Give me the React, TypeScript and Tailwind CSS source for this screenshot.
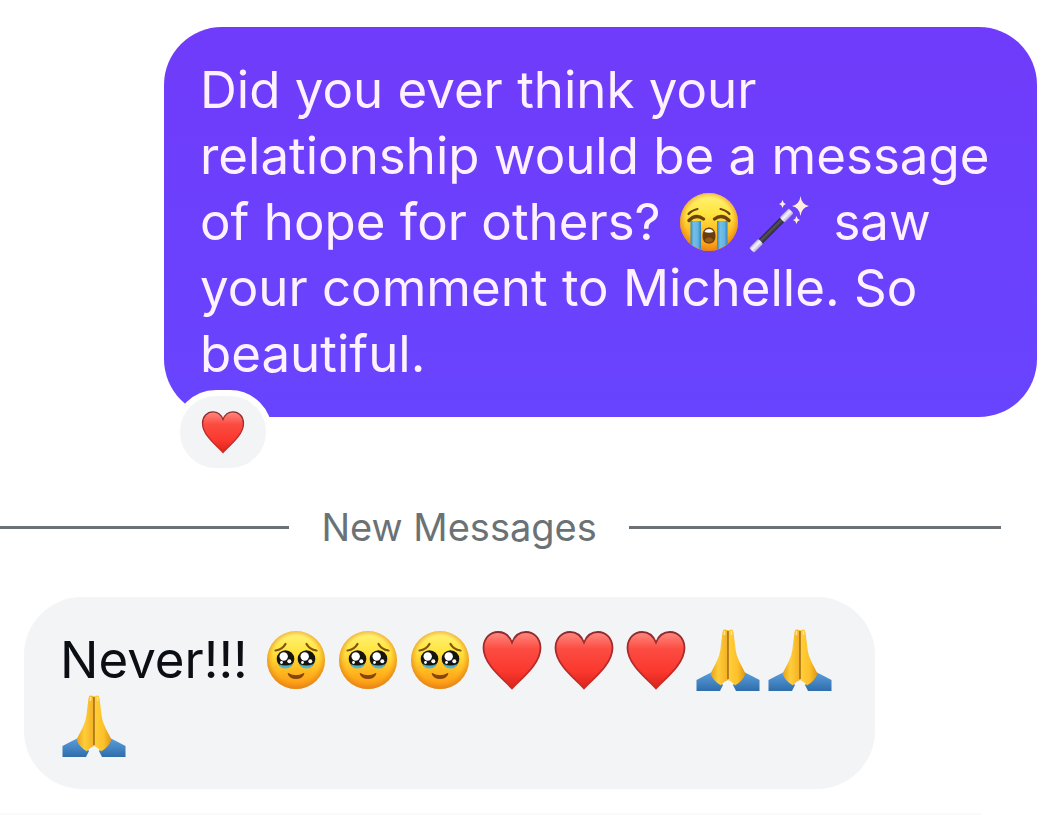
const emojiClass = "inline-block w-16 h-16 ml-0.5 mr-1.5 align-[-14px]";

// Shared gradients, referenced by id from every emoji below
function EmojiDefs() {
  return (
    <svg className="absolute w-0 h-0" aria-hidden="true">
      <defs>
        <linearGradient id="face" x1="0" y1="0" x2="0" y2="1">
          <stop offset="0" stopColor="#fff27a" />
          <stop offset="0.35" stopColor="#ffe540" />
          <stop offset="0.7" stopColor="#ffb81f" />
          <stop offset="1" stopColor="#fb9312" />
        </linearGradient>
        <radialGradient id="faceEdge" cx="0.5" cy="0.48" r="0.53">
          <stop offset="0.75" stopColor="#ee8c1a" stopOpacity="0" />
          <stop offset="1" stopColor="#dc7a14" stopOpacity="0.8" />
        </radialGradient>
        <linearGradient id="heart" x1="0" y1="0" x2="0" y2="1">
          <stop offset="0" stopColor="#ff8a80" />
          <stop offset="0.3" stopColor="#fc4c42" />
          <stop offset="0.7" stopColor="#fa382e" />
          <stop offset="1" stopColor="#d9231c" />
        </linearGradient>
        <linearGradient id="heartEdge" x1="0" y1="0" x2="0" y2="1">
          <stop offset="0" stopColor="#8c2a2e" />
          <stop offset="0.6" stopColor="#bb2a2a" />
          <stop offset="1" stopColor="#d02a24" />
        </linearGradient>
        <linearGradient id="tear" x1="0" y1="0" x2="1" y2="0">
          <stop offset="0" stopColor="#3584ba" />
          <stop offset="0.3" stopColor="#72bfe9" />
          <stop offset="0.7" stopColor="#64b4e3" />
          <stop offset="1" stopColor="#3584ba" />
        </linearGradient>
        <linearGradient id="handLeft" x1="0" y1="0" x2="1" y2="0">
          <stop offset="0" stopColor="#e6a01c" />
          <stop offset="0.45" stopColor="#ffcd3a" />
          <stop offset="1" stopColor="#f3b024" />
        </linearGradient>
        <linearGradient id="handRight" x1="0" y1="0" x2="1" y2="0">
          <stop offset="0" stopColor="#ffd03a" />
          <stop offset="0.55" stopColor="#fdc02a" />
          <stop offset="1" stopColor="#dc961c" />
        </linearGradient>
        <linearGradient id="sleeve" x1="0" y1="0" x2="0" y2="1">
          <stop offset="0" stopColor="#5c9fdc" />
          <stop offset="1" stopColor="#2f6dab" />
        </linearGradient>
        <linearGradient id="wand" x1="0" y1="0" x2="1" y2="0">
          <stop offset="0" stopColor="#25242b" />
          <stop offset="0.4" stopColor="#54525c" />
          <stop offset="1" stopColor="#2b2a31" />
        </linearGradient>
        <linearGradient id="wandTip" x1="0" y1="0" x2="1" y2="0">
          <stop offset="0" stopColor="#b9b2cf" />
          <stop offset="0.45" stopColor="#fbf4ff" />
          <stop offset="1" stopColor="#b3abc9" />
        </linearGradient>
      </defs>
    </svg>
  );
}

function Face({ children, label }: { children: React.ReactNode; label: string }) {
  return (
    <svg className={emojiClass} viewBox="0 0 64 64" role="img" aria-label={label}>
      <circle cx="32" cy="32" r="29" fill="url(#face)" />
      <circle cx="32" cy="32" r="29" fill="url(#faceEdge)" />
      {children}
    </svg>
  );
}

function CryingFace() {
  return (
    <Face label="Loudly crying face">
      <path d="M13.500 31H24V59.500Q18 57.500 13.500 54Z" fill="url(#tear)" />
      <path d="M40 31H50.500V54Q46 57.500 40 59.500Z" fill="url(#tear)" />
      <g fill="none" stroke="#6b4310" strokeLinecap="round">
        <path d="M12 30.500Q19 23.500 26.500 29" strokeWidth="3.400" />
        <path d="M37.500 29Q45 23.500 52 30.500" strokeWidth="3.400" />
        <path d="M11.500 24Q14.500 20.500 20.500 19" strokeWidth="2.200" />
        <path d="M43.500 19Q49.500 20.500 52.500 24" strokeWidth="2.200" />
      </g>
      <path d="M32 37.500C36 37.500 38.500 41 38.500 46C38.500 51 36 53.500 32 53.500S25.500 51 25.500 46C25.500 41 28 37.500 32 37.500Z" fill="#6a3b0d" />
      <path d="M27.500 42Q28.500 39 32 39T36.500 42Q32 43.500 27.500 42Z" fill="#fff" />
      <path d="M27.500 50Q32 44.500 36.500 50Q35 52.500 32 52.500T27.500 50Z" fill="#93591a" />
    </Face>
  );
}

function HoldingTearsFace() {
  return (
    <Face label="Face holding back tears">
      {[21.5, 42.5].map((cx) => (
        <g key={cx}>
          <circle cx={cx} cy="31" r="8.800" fill="#15140f" />
          <path d={`M${cx - 7} 36Q${cx} 39 ${cx + 7} 36Q${cx + 5} 40.500 ${cx} 40.500T${cx - 7} 36Z`} fill="#4fb4cc" />
          <circle cx={cx - 1.8} cy="28.500" r="4.200" fill="#fff" />
          <circle cx={cx + 3.8} cy="33.200" r="2" fill="#fff" />
          <circle cx={cx - 4} cy="34.500" r="1.400" fill="#fff" />
        </g>
      ))}
      <g fill="none" stroke="#85510f" strokeLinecap="round">
        <path d="M11.500 22.500Q18.500 21.500 21.500 16" strokeWidth="2.200" />
        <path d="M42.500 16Q45.500 21.500 52.500 22.500" strokeWidth="2.200" />
      </g>
      <path d="M24 45.500Q32 50 40 45.500Q38.500 50.500 32 50.500T24 45.500Z" fill="#85440b" stroke="#85440b" strokeLinejoin="round" />
    </Face>
  );
}

function Heart({ className = emojiClass }: { className?: string }) {
  return (
    <svg className={className} viewBox="0 0 64 64" role="img" aria-label="Red heart">
      <path
        d="M32 60.500C27.500 55.500 17 46.500 11 38.500C6.500 32.500 3.500 26.500 3.500 20C3.500 10.500 10 4 18 4C24.500 4 29.500 8 32 14.500C34.500 8 39.500 4 46 4C54 4 60.500 10.500 60.500 20C60.500 26.500 57.500 32.500 53 38.500C47 46.500 36.500 55.500 32 60.500Z"
        fill="url(#heart)"
        stroke="url(#heartEdge)"
        strokeWidth="1.800"
      />
    </svg>
  );
}

function Hands() {
  return (
    <svg className={emojiClass} viewBox="0 0 64 64" role="img" aria-label="Folded hands">
      <path d="M0.500 52Q8 48 16 44L27 57L24 63H0.500Z" fill="url(#sleeve)" />
      <path d="M63.500 52Q56 48 48 44L37 57L40 63H63.500Z" fill="url(#sleeve)" />
      <path d="M32 2.500Q27 0 26.500 4L24.500 21Q24 27 20.500 34L14.500 45.500Q17 53 25 57.500Q26.500 54.500 32 52Z" fill="url(#handLeft)" />
      <path d="M32 2.500Q37 0 37.500 4L39.500 21Q40 27 43.500 34L49.500 45.500Q47 53 39 57.500Q37.500 54.500 32 52Z" fill="url(#handRight)" />
      <path d="M32 3V51" stroke="#9a6412" strokeWidth="1.400" fill="none" />
      <path d="M28.500 3V7M35.500 3V7" stroke="#ffe393" strokeWidth="1.600" />
    </svg>
  );
}

function Wand() {
  return (
    <svg className={emojiClass} viewBox="0 0 64 64" role="img" aria-label="Magic wand">
      <g transform="translate(4 59) rotate(45)">
        <rect x="-3" y="-52" width="6" height="52" rx="1" fill="url(#wand)" />
        <rect x="-3.500" y="-54" width="7" height="13" rx="1.500" fill="url(#wandTip)" />
        <rect x="-3.500" y="-11" width="7" height="13" rx="1.500" fill="url(#wandTip)" />
      </g>
      <g fill="#ffeedd">
        <path d="M51.500 6Q52.500 14.500 60 16Q52.500 17.500 51.500 26Q50.500 17.500 43 16Q50.500 14.500 51.500 6Z" />
        <path d="M33.500 10Q34.200 13.300 37 14Q34.200 14.700 33.500 18Q32.800 14.700 30 14Q32.800 13.300 33.500 10Z" />
        <path d="M47.500 26Q48.200 29.300 51 30Q48.200 30.700 47.500 34Q46.800 30.700 44 30Q46.800 29.300 47.500 26Z" />
      </g>
    </svg>
  );
}

export default function App() {
  return (
    <main className="relative min-h-screen bg-white overflow-hidden font-['Inter',sans-serif]">
      <EmojiDefs />

      <div className="flex flex-col pt-[27px]">
        {/* Sent message */}
        <div className="flex justify-end px-6">
          <div className="relative max-w-[873px] rounded-[58px] bg-linear-to-b from-[#703bfa] to-[#6844ff] px-9 py-[30px]">
            <p className="text-[51px] leading-[66px] text-[#fdf0ff]">
              Did you ever think your relationship would be a message of hope for others?{" "}
              <CryingFace />
              <Wand /> saw your comment to Michelle. So beautiful.
            </p>
            <button
              type="button"
              aria-label="Heart reaction"
              className="absolute left-[10px] -bottom-[57px] flex items-center justify-center w-[98px] h-[84px] rounded-[42px] border-[6px] border-white bg-[#f2f4f6]"
            >
              <Heart className="w-[46px] h-[46px]" />
            </button>
          </div>
        </div>

        {/* Unread divider */}
        <div className="flex items-center gap-8 mt-[86px] mb-[46px] mr-[60px]">
          <div className="flex-[7] h-[3px] bg-[#6b7276]" />
          <span className="text-[38px] leading-[48px] text-[#6b7276] whitespace-nowrap">New Messages</span>
          <div className="flex-[9] h-[3px] bg-[#6b7276]" />
        </div>

        {/* Received message */}
        <div className="flex px-6">
          <div className="max-w-[851px] rounded-[58px] bg-[#f2f4f6] px-9 py-[30px]">
            <p className="text-[51px] leading-[66px] text-[#0b0f14]">
              Never!!! <HoldingTearsFace />
              <HoldingTearsFace />
              <HoldingTearsFace />
              <Heart />
              <Heart />
              <Heart />
              <Hands />
              <Hands />
              <Hands />
            </p>
          </div>
        </div>

        <div className="mt-6 mr-20 h-[2px] bg-[#fafafa]" />
      </div>
    </main>
  );
}
